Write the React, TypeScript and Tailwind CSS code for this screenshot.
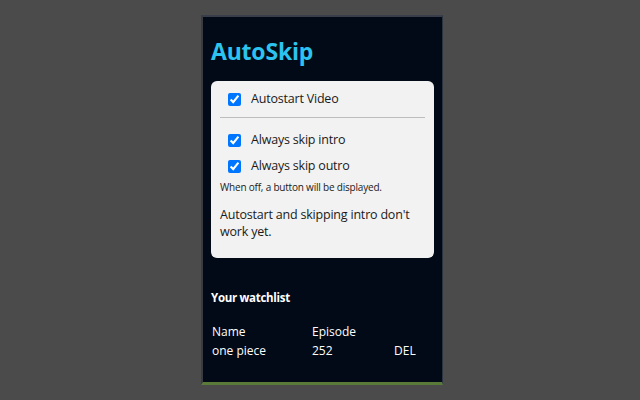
import React from "react";

function Option({ label }: { label: string }) {
  return (
    <label className="flex items-center h-[26px]">
      <input
        type="checkbox"
        checked
        readOnly
        className="w-[13px] h-[13px] ml-[8px] mr-[10px] m-0 accent-[#0075ff]"
      />
      <span className="text-[12.5px] text-[#1a1a1a] tracking-[-0.2px]">{label}</span>
    </label>
  );
}

export default function App() {
  return (
    <div
      className="w-[640px] h-[400px] bg-[#4b4b4b] flex pl-[201px] pt-[15px]"
      style={{ fontFamily: '"Open Sans", "Noto Sans", sans-serif' }}
    >
      <div className="w-[242px] h-[370px] bg-[#010a16] border-t-2 border-t-[#3a3e4a] border-l-2 border-l-[#3a3b40] border-r border-r-[#2a3440] border-b-[3px] border-b-[#5a7a3a] pl-[8px] pr-[8px]">
        <h1 className="text-[23px] font-bold text-[#2cc3f0] mt-[18px] leading-[32px] tracking-[-0.2px]">
          AutoSkip
        </h1>
        <div className="mt-[14px] bg-[#f2f2f2] rounded-[6px] pl-[9px] pr-[9px] pt-[5px] pb-[18px]">
          <Option label="Autostart Video" />
          <hr className="border-0 border-t border-t-[#bdbdbd] mt-[5px] mb-[6px]" />
          <div className="pt-[3px]">
            <Option label="Always skip intro" />
            <Option label="Always skip outro" />
          </div>
          <p className="text-[10px] text-[#1a1a1a] mt-[1px] leading-[14px] tracking-[-0.2px]">
            When off, a button will be displayed.
          </p>
          <p className="text-[12.5px] text-[#1a1a1a] mt-[12px] leading-[17px] tracking-[-0.2px]">
            Autostart and skipping intro don't work yet.
          </p>
        </div>
        <h2 className="text-[11.5px] font-bold text-white mt-[32px] leading-[16px] tracking-[-0.3px]">
          Your watchlist
        </h2>
        <table className="mt-[16px] ml-[1px] text-[12px] text-white">
          <tbody>
            <tr className="h-[19px]">
              <td className="w-[100px]">Name</td>
              <td className="w-[82px]">Episode</td>
              <td></td>
            </tr>
            <tr className="h-[19px]">
              <td>one piece</td>
              <td>252</td>
              <td>DEL</td>
            </tr>
          </tbody>
        </table>
      </div>
    </div>
  );
}
